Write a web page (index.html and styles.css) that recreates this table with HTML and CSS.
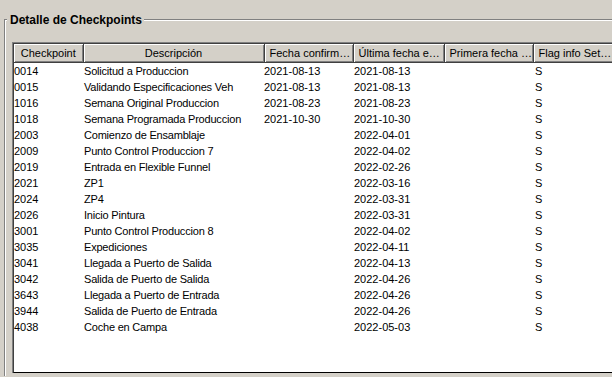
FILE: index.html
```html
<!DOCTYPE html>
<html>
<head>
<meta charset="utf-8">
<link rel="stylesheet" href="styles.css">
</head>
<body>
<div class="group">
  <div class="legend">Detalle de Checkpoints</div>
  <div class="grid-outer">
    <div class="grid-inner">
      <table class="grid">
        <colgroup>
          <col class="c1"><col class="c2"><col class="c3"><col class="c4"><col class="c5"><col class="c6">
        </colgroup>
        <thead>
          <tr>
            <th>Checkpoint</th>
            <th>Descripción</th>
            <th class="trunc">Fecha confirm…</th>
            <th class="trunc">Última fecha e…</th>
            <th class="trunc">Primera fecha …</th>
            <th class="trunc">Flag info Set…</th>
          </tr>
        </thead>
        <tbody>
          <tr><td>0014</td><td class="d">Solicitud a Produccion</td><td>2021-08-13</td><td class="u">2021-08-13</td><td></td><td class="f">S</td></tr>
          <tr><td>0015</td><td class="d">Validando Especificaciones Veh</td><td>2021-08-13</td><td class="u">2021-08-13</td><td></td><td class="f">S</td></tr>
          <tr><td>1016</td><td class="d">Semana Original Produccion</td><td>2021-08-23</td><td class="u">2021-08-23</td><td></td><td class="f">S</td></tr>
          <tr><td>1018</td><td class="d">Semana Programada Produccion</td><td>2021-10-30</td><td class="u">2021-10-30</td><td></td><td class="f">S</td></tr>
          <tr><td>2003</td><td class="d">Comienzo de Ensamblaje</td><td></td><td class="u">2022-04-01</td><td></td><td class="f">S</td></tr>
          <tr><td>2009</td><td class="d">Punto Control Produccion 7</td><td></td><td class="u">2022-04-02</td><td></td><td class="f">S</td></tr>
          <tr><td>2019</td><td class="d">Entrada en Flexible Funnel</td><td></td><td class="u">2022-02-26</td><td></td><td class="f">S</td></tr>
          <tr><td>2021</td><td class="d">ZP1</td><td></td><td class="u">2022-03-16</td><td></td><td class="f">S</td></tr>
          <tr><td>2024</td><td class="d">ZP4</td><td></td><td class="u">2022-03-31</td><td></td><td class="f">S</td></tr>
          <tr><td>2026</td><td class="d">Inicio Pintura</td><td></td><td class="u">2022-03-31</td><td></td><td class="f">S</td></tr>
          <tr><td>3001</td><td class="d">Punto Control Produccion 8</td><td></td><td class="u">2022-04-02</td><td></td><td class="f">S</td></tr>
          <tr><td>3035</td><td class="d">Expediciones</td><td></td><td class="u">2022-04-11</td><td></td><td class="f">S</td></tr>
          <tr><td>3041</td><td class="d">Llegada a Puerto de Salida</td><td></td><td class="u">2022-04-13</td><td></td><td class="f">S</td></tr>
          <tr><td>3042</td><td class="d">Salida de Puerto de Salida</td><td></td><td class="u">2022-04-26</td><td></td><td class="f">S</td></tr>
          <tr><td>3643</td><td class="d">Llegada a Puerto de Entrada</td><td></td><td class="u">2022-04-26</td><td></td><td class="f">S</td></tr>
          <tr><td>3944</td><td class="d">Salida de Puerto de Entrada</td><td></td><td class="u">2022-04-26</td><td></td><td class="f">S</td></tr>
          <tr><td>4038</td><td class="d">Coche en Campa</td><td></td><td class="u">2022-05-03</td><td></td><td class="f">S</td></tr>
        </tbody>
      </table>
    </div>
  </div>
</div>
</body>
</html>
```

FILE: styles.css
```css
html, body {
  margin: 0;
  padding: 0;
  background: #d4d0c8;
  overflow: hidden;
  width: 612px;
  height: 377px;
}
body {
  font-family: "Liberation Sans", Arial, sans-serif;
  font-size: 11px;
  color: #000;
}
.group {
  margin: 19px 0 0 4px;
  border-top: 1px solid #808080;
  border-left: 1px solid #808080;
  box-shadow: inset 1px 1px 0 #fff;
  height: 356px;
  padding-left: 7px;
}
.legend {
  display: block;
  width: fit-content;
  margin: -7px 0 0 -5px;
  padding: 0 2px 0 3px;
  background: #d4d0c8;
  font-weight: bold;
  font-size: 12px;
  line-height: 14px;
  height: 14px;
}
.grid-outer {
  margin-top: 15px;
  width: 700px;
  border-top: 1px solid #808080;
  border-left: 1px solid #808080;
}
.grid-inner {
  border-top: 1px solid #404040;
  border-left: 1px solid #404040;
  border-bottom: 1px solid #000;
  height: 328px;
  background: #fff;
}
.grid {
  border-collapse: collapse;
  table-layout: fixed;
  width: 640px;
}
.c1 { width: 69px; }
.c2 { width: 181px; }
.c3 { width: 89px; }
.c4 { width: 91px; }
.c5 { width: 89px; }
.c6 { width: 121px; }
.grid th {
  box-sizing: border-box;
  height: 18px;
  padding: 0 2px;
  background: #d4d0c8;
  font-weight: normal;
  text-align: center;
  white-space: nowrap;
  overflow: hidden;
  border-right: 1px solid #404040;
  border-bottom: 1px solid #404040;
  box-shadow: inset 1px 1px 0 #fff, inset -1px -1px 0 #808080;
  line-height: 16px;
}
.grid th.trunc {
  text-align: left;
  padding-left: 5px;
}
.grid td {
  height: 16px;
  padding: 0;
  line-height: 16px;
  white-space: nowrap;
  overflow: hidden;
  vertical-align: middle;
}
.grid td.d { padding-left: 1px; letter-spacing: -0.2px; }
.grid td.u { padding-left: 1px; }
.grid td.f { padding-left: 2px; }
```
